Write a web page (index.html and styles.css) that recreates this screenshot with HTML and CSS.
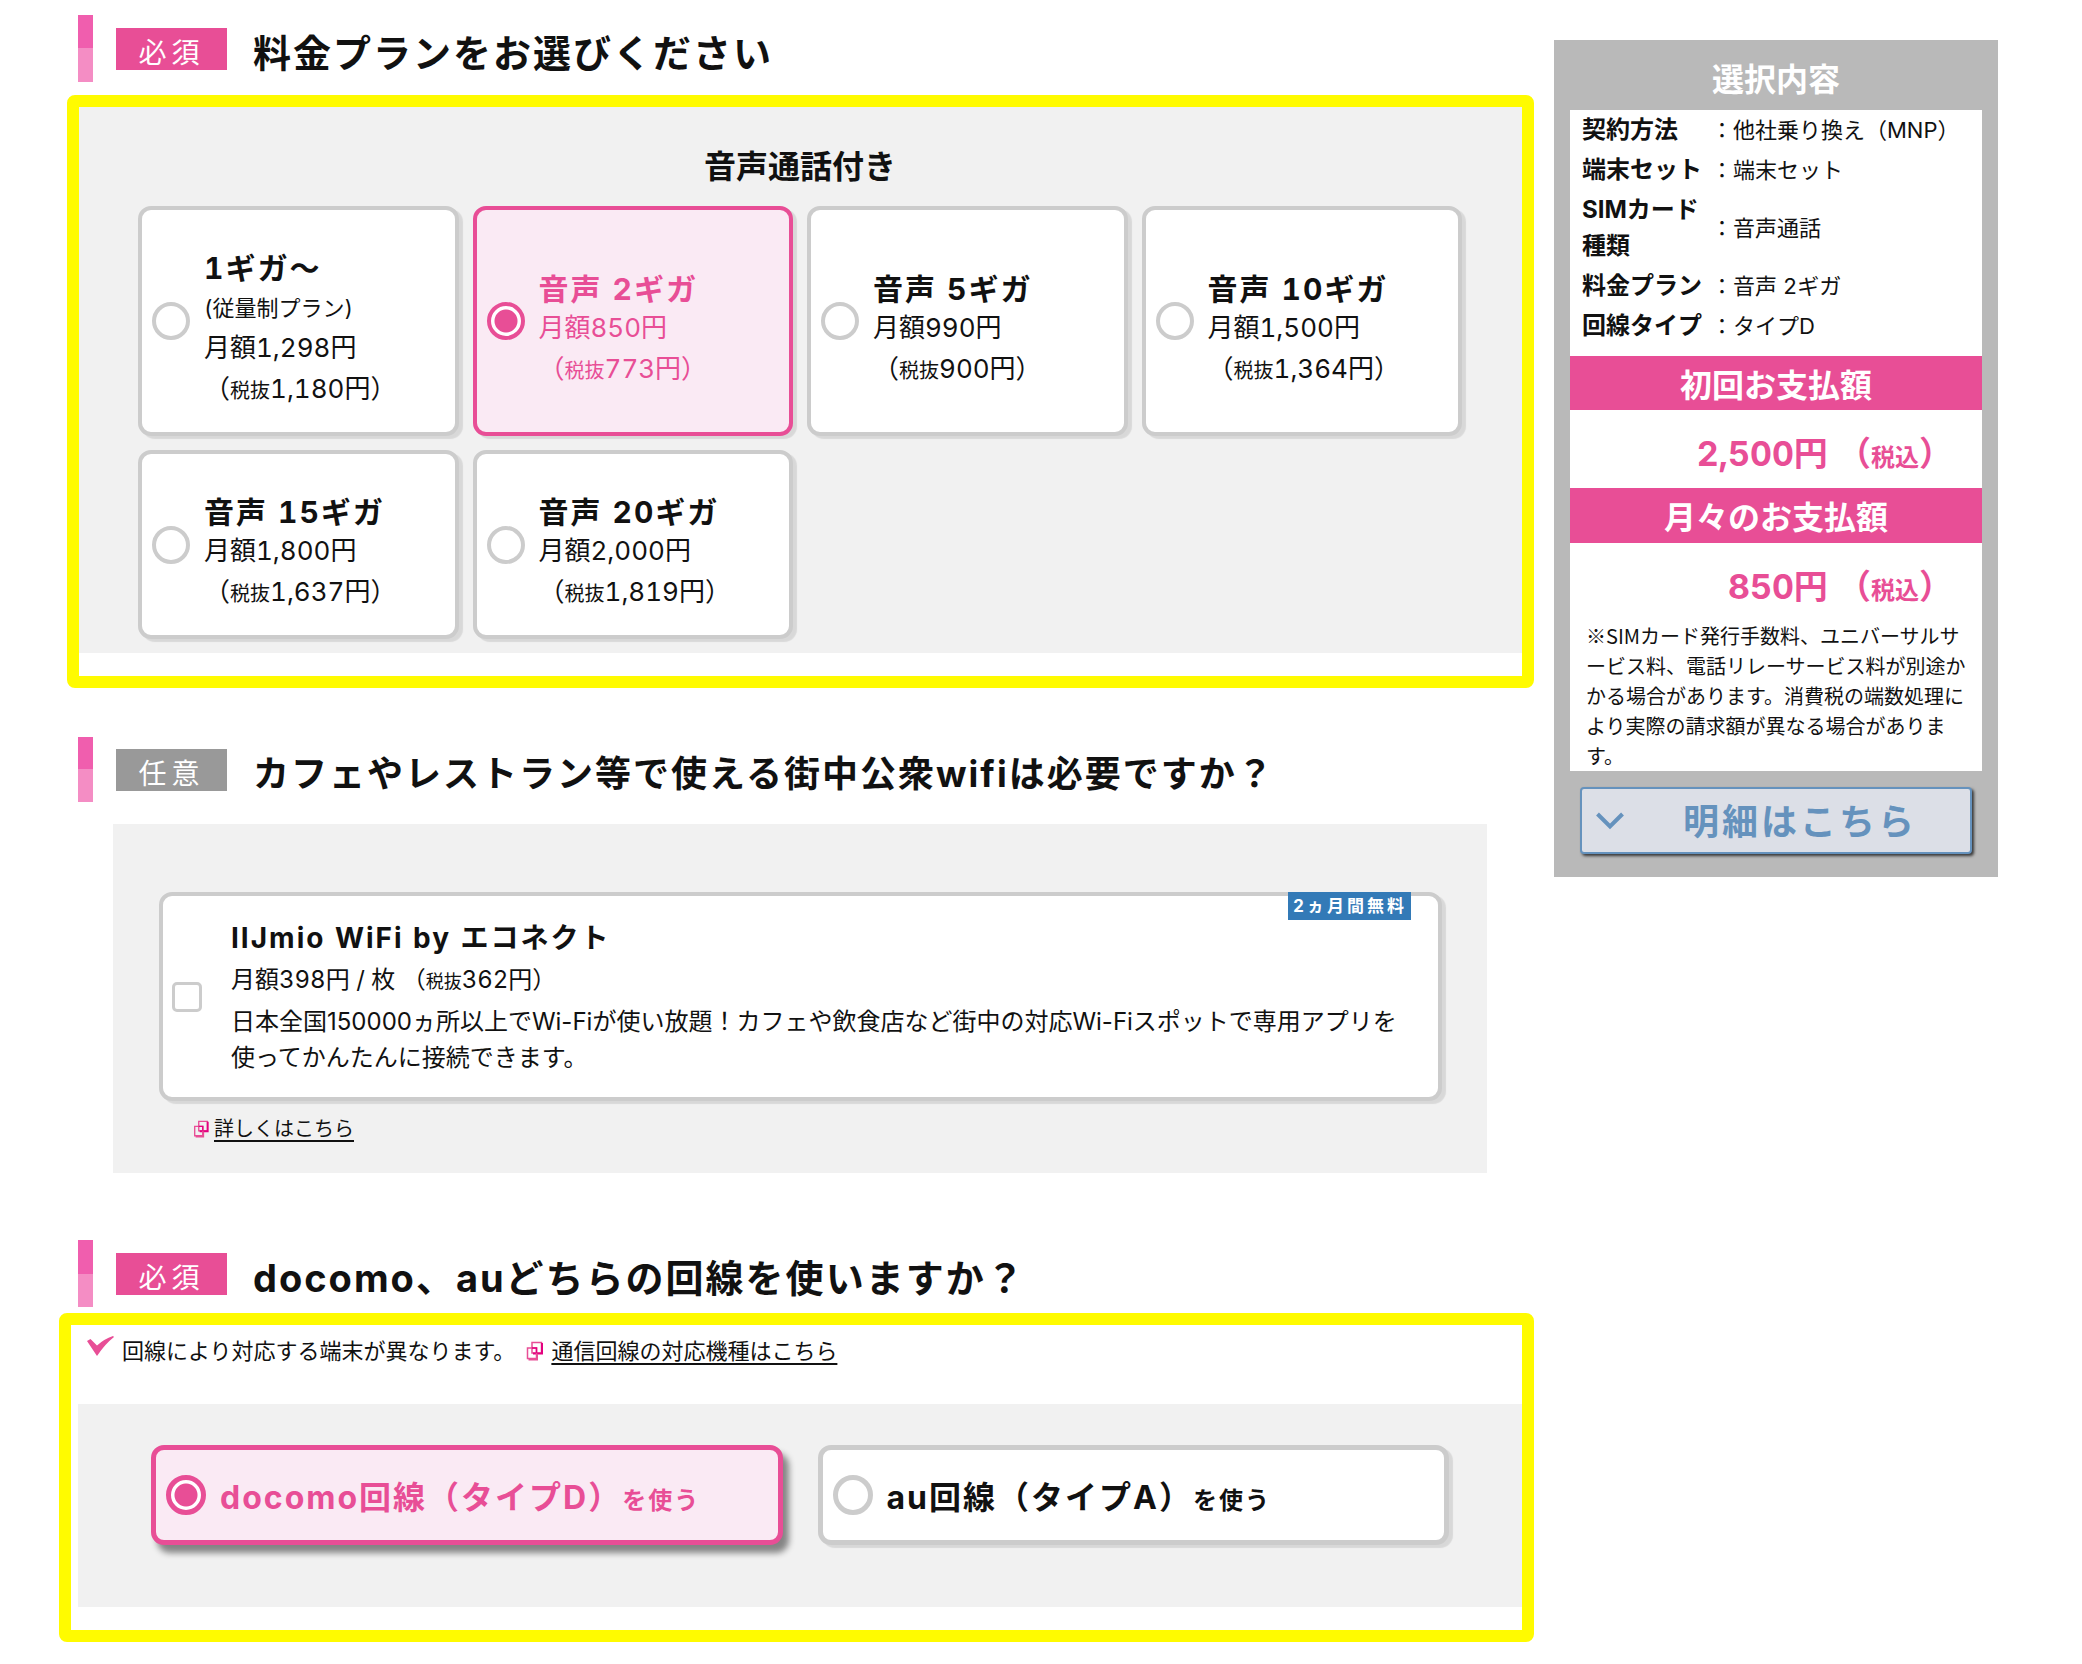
FILE: index.html
```html
<!DOCTYPE html>
<html lang="ja">
<head>
<meta charset="utf-8">
<meta name="viewport" content="width=device-width, initial-scale=1">
<title>料金プランの選択</title>
<link rel="stylesheet" href="styles.css">
</head>
<body>
<svg class="sprite" aria-hidden="true">
  <symbol id="icon-window" viewBox="0 0 17 20">
    <path d="M6 1.500h9.500v10.500H6z" fill="none" stroke="#e84e96" stroke-width="1.500"/>
    <path d="M16 2v10.500H7" fill="none" stroke="#e4007f" stroke-width="2"/>
    <path d="M1.500 7h9v10.500h-9z" fill="none" stroke="#e84e96" stroke-width="1.500"/>
    <path d="M11 13v5.500H2.500" fill="none" stroke="#e84e96" stroke-width="2"/>
    <path d="M6 7h4.500v5" fill="none" stroke="#e4007f" stroke-width="1.500"/>
  </symbol>
</svg>
<div class="page">
  <main class="main">
    <section>
      <div class="heading">
        <span class="tag">必須</span>
        <h2 class="heading-text">料金プランをお選びください</h2>
      </div>
      <div class="frame frame-plans">
        <fieldset class="panel panel-plans">
          <legend class="panel-title">音声通話付き</legend>
          <div class="plans">
            <label class="card plan">
              <input class="radio" type="radio" name="plan">
              <span class="plan-body"><strong class="name">1ギガ〜</strong><span class="price"><span class="sub">(従量制プラン)</span></span><span class="price">月額1,298円</span><span class="price">（<small>税抜</small>1,180円）</span></span>
            </label>
            <label class="card plan">
              <input class="radio" type="radio" name="plan" checked>
              <span class="plan-body"><strong class="name">音声 2ギガ</strong><span class="price">月額850円</span><span class="price">（<small>税抜</small>773円）</span></span>
            </label>
            <label class="card plan">
              <input class="radio" type="radio" name="plan">
              <span class="plan-body"><strong class="name">音声 5ギガ</strong><span class="price">月額990円</span><span class="price">（<small>税抜</small>900円）</span></span>
            </label>
            <label class="card plan">
              <input class="radio" type="radio" name="plan">
              <span class="plan-body"><strong class="name">音声 10ギガ</strong><span class="price">月額1,500円</span><span class="price">（<small>税抜</small>1,364円）</span></span>
            </label>
            <label class="card plan">
              <input class="radio" type="radio" name="plan">
              <span class="plan-body"><strong class="name">音声 15ギガ</strong><span class="price">月額1,800円</span><span class="price">（<small>税抜</small>1,637円）</span></span>
            </label>
            <label class="card plan">
              <input class="radio" type="radio" name="plan">
              <span class="plan-body"><strong class="name">音声 20ギガ</strong><span class="price">月額2,000円</span><span class="price">（<small>税抜</small>1,819円）</span></span>
            </label>
          </div>
        </fieldset>
      </div>
    </section>

    <section class="section-wifi">
      <div class="heading heading-small">
        <span class="tag tag-optional">任意</span>
        <h2 class="heading-text">カフェやレストラン等で使える街中公衆wifiは必要ですか？</h2>
      </div>
      <div class="panel panel-wifi">
        <label class="card wifi">
          <input class="checkbox" type="checkbox" name="wifi">
          <span class="wifi-body">
            <strong class="wifi-name">IIJmio WiFi by エコネクト</strong>
            <span class="wifi-price">月額398円 / 枚 （<small>税抜</small>362円）</span>
            <span class="wifi-text">日本全国150000ヵ所以上でWi-Fiが使い放題！カフェや飲食店など街中の対応Wi-Fiスポットで専用アプリを<br>使ってかんたんに接続できます。</span>
          </span>
          <span class="free">2ヵ月間無料</span>
        </label>
        <p class="more"><svg class="icon-window"><use href="#icon-window"/></svg><a href="#wifi">詳しくはこちら</a></p>
      </div>
    </section>

    <section class="section-line">
      <div class="heading">
        <span class="tag">必須</span>
        <h2 class="heading-text">docomo、auどちらの回線を使いますか？</h2>
      </div>
      <div class="frame frame-lines">
        <p class="note">
          <svg class="icon-check" viewBox="0 0 27 20"><path d="M0 5 3.500 3l6.500 6.500Q17 3 26 0l1 1Q18 8 10 20z" fill="#e84e96"/></svg>
          <span>回線により対応する端末が異なります。</span>
          <svg class="icon-window icon-window-large"><use href="#icon-window"/></svg>
          <a href="#devices">通信回線の対応機種はこちら</a>
        </p>
        <div class="panel panel-lines">
          <label class="card line">
            <input class="radio" type="radio" name="line" checked>
            <span class="line-name">docomo回線（タイプD）<small>を使う</small></span>
          </label>
          <label class="card line">
            <input class="radio" type="radio" name="line">
            <span class="line-name">au回線（タイプA）<small>を使う</small></span>
          </label>
        </div>
      </div>
    </section>
  </main>

  <aside class="summary">
    <h2 class="summary-title">選択内容</h2>
    <div class="summary-body">
      <table class="choices">
        <tr><th scope="row">契約方法</th><td>：他社乗り換え（MNP）</td></tr>
        <tr><th scope="row">端末セット</th><td>：端末セット</td></tr>
        <tr><th scope="row">SIMカード種類</th><td>：音声通話</td></tr>
        <tr><th scope="row">料金プラン</th><td>：音声 2ギガ</td></tr>
        <tr><th scope="row">回線タイプ</th><td>：タイプD</td></tr>
      </table>
      <h3 class="bar">初回お支払額</h3>
      <p class="amount">2,500円 （<small>税込</small>）</p>
      <h3 class="bar bar-monthly">月々のお支払額</h3>
      <p class="amount">850円 （<small>税込</small>）</p>
      <p class="remarks">※SIMカード発行手数料、ユニバーサルサ<br>ービス料、電話リレーサービス料が別途か<br>かる場合があります。消費税の端数処理に<br>より実際の請求額が異なる場合がありま<br>す。</p>
    </div>
    <button class="detail" type="button">
      <svg class="chevron" viewBox="0 0 28 18"><path d="M1.500 2 14 14.500 26.500 2" fill="none" stroke="currentColor" stroke-width="4"/></svg>
      <span class="detail-text">明細はこちら</span>
    </button>
  </aside>
</div>
</body>
</html>
```
FILE: styles.css
```css
:root {
  --pink: #e84e96;
  --pink-pale: #faeaf4;
  --line: #ccc;
  --panel: #f1f1f1;
  --yellow: #fffb00;
  --blue: #6592bd;
}

* {
  box-sizing: border-box;
}

body {
  margin: 0;
  background: #fff;
  color: #111;
  font-family: Inter, "Noto Sans CJK JP", sans-serif;
  font-variant-numeric: tabular-nums;
}

h2, h3, p {
  margin: 0;
}

a {
  color: inherit;
  text-decoration-thickness: 2px;
  text-underline-offset: 4px;
}

.sprite {
  display: none;
}

.page {
  display: flex;
  align-items: flex-start;
  gap: 20px;
  padding: 0 84px 22px 59px;
}

.main {
  flex: 1;
  min-width: 0;
  padding-top: 15px;
}

/* Section headings */
.heading {
  display: flex;
  align-items: center;
  height: 67px;
  margin-left: 19px;
  font-size: 38px;
}

.heading::before {
  content: "";
  align-self: stretch;
  width: 15px;
  margin-right: 23px;
  background: linear-gradient(#f05eae 50%, #f48dc4 50%);
}

.heading-small {
  height: 65px;
  font-size: 36px;
}

.tag {
  flex: none;
  width: 111px;
  height: 42px;
  margin-right: 26px;
  padding-top: 7px;
  background: var(--pink);
  color: #fff;
  font-size: 28px;
  line-height: 36px;
  letter-spacing: 5px;
  text-align: center;
}

.tag-optional {
  background: #999;
}

.heading-text {
  padding-top: 8px;
  font-size: inherit;
  font-weight: 700;
  line-height: 48px;
  letter-spacing: 2px;
}

/* Frames and panels */
.frame {
  border: 12px solid var(--yellow);
  border-radius: 8px;
  padding-bottom: 23px;
}

.panel {
  margin: 0;
  border: 0;
  background: var(--panel);
}

.frame-plans {
  margin: 13px 0 0 8px;
}

.panel-plans {
  padding: 36px 60px 14px 59px;
}

.panel-title {
  float: left;
  width: 100%;
  margin-bottom: 15px;
  padding: 0;
  font-size: 32px;
  font-weight: 700;
  line-height: 48px;
  text-align: center;
}

.plans {
  clear: both;
  display: grid;
  grid-template-columns: repeat(4, 1fr);
  gap: 14px;
}

/* Selectable cards */
.card {
  display: flex;
  align-items: center;
  border: 4px solid var(--line);
  border-radius: 13px;
  background: #fff;
  box-shadow: 4px 3px 1px rgba(0, 0, 0, 0.1);
}

.card:has(.radio:checked) {
  border-color: var(--pink);
  background: var(--pink-pale);
  color: var(--pink);
}

.radio {
  flex: none;
  appearance: none;
  width: 38px;
  height: 38px;
  margin: 0;
  border: 4px solid var(--line);
  border-radius: 50%;
  background: #fff;
}

.radio:checked {
  border-color: var(--pink);
  background: radial-gradient(circle, var(--pink) 11px, #fff 12px);
}

.plan {
  gap: 14px;
  padding: 22px 10px;
}

.plan-body {
  padding: 18px 0 1px;
  font-size: 26px;
}

.name {
  display: block;
  font-size: 30px;
  line-height: 36px;
  letter-spacing: 2px;
}

.price {
  display: block;
  height: 41px;
  line-height: 41px;
}

.price small {
  font-size: 20px;
}

.sub {
  font-size: 22px;
}

/* Wi-Fi option */
.section-wifi {
  margin-top: 49px;
}

.panel-wifi {
  margin: 22px 47px 0 54px;
  padding: 68px 45px 26px 46px;
}

.wifi {
  position: relative;
  gap: 29px;
  padding: 22px 10px 21px 9px;
}

.checkbox {
  flex: none;
  appearance: none;
  width: 30px;
  height: 30px;
  margin: 0;
  border: 3px solid var(--line);
  border-radius: 5px;
  background: #fff;
}

.wifi-body {
  font-size: 24px;
  line-height: 36px;
}

.wifi-name,
.wifi-price,
.wifi-text {
  display: block;
}

.wifi-name {
  font-size: 28px;
  line-height: 40px;
  letter-spacing: 2px;
}

.wifi-price {
  height: 46px;
  line-height: 43px;
}

.wifi-price small {
  font-size: 18px;
}

.wifi-text {
  font-variant-numeric: normal;
}

.free {
  position: absolute;
  top: -4px;
  right: 27px;
  padding: 0 4px 0 5px;
  background: #337ab7;
  color: #fff;
  font-size: 17px;
  font-weight: 700;
  line-height: 28px;
  letter-spacing: 3px;
}

.more {
  display: flex;
  align-items: center;
  gap: 5px;
  margin-top: 10px;
  padding-left: 34px;
  font-size: 20px;
  line-height: 36px;
}

.icon-window {
  width: 16px;
  height: 18px;
}

.icon-window-large {
  width: 17px;
  height: 20px;
  margin-left: 3px;
}

/* Carrier choice */
.section-line {
  margin-top: 67px;
}

.frame-lines {
  margin-top: 6px;
}

.note {
  display: flex;
  align-items: center;
  gap: 8px;
  padding: 8px 16px 35px;
  font-size: 22px;
  line-height: 36px;
}

.icon-check {
  width: 27px;
  height: 20px;
  margin-bottom: 10px;
}

.panel-lines {
  display: grid;
  grid-template-columns: 1fr 1fr;
  gap: 35px;
  margin-left: 7px;
  padding: 41px 73px 62px;
}

.line {
  gap: 14px;
  height: 100px;
  padding: 0 10px;
  border-width: 5px;
}

.line:has(.radio:checked) {
  box-shadow: 6px 8px 6px rgba(0, 0, 0, 0.45);
}

.line .radio {
  width: 40px;
  height: 40px;
  border-width: 5px;
}

.line-name {
  padding-top: 8px;
  font-size: 32px;
  font-weight: 700;
  line-height: 44px;
  letter-spacing: 2px;
}

.line-name small {
  font-size: 24px;
}

/* Summary column */
.summary {
  flex: none;
  width: 444px;
  margin-top: 40px;
  padding: 16px 16px 23px;
  background: #b9b9b9;
}

.summary-title {
  padding-bottom: 6px;
  color: #fff;
  font-size: 32px;
  line-height: 48px;
  text-align: center;
}

.summary-body {
  background: #fff;
}

.choices {
  width: 100%;
  margin-bottom: 10px;
  border-collapse: collapse;
  line-height: 36px;
}

.choices th {
  width: 141px;
  padding: 2px 4px 2px 12px;
  font-size: 24px;
  text-align: left;
}

.choices td {
  padding: 2px 0;
  font-size: 22px;
}

.bar {
  padding-top: 6px;
  background: var(--pink);
  color: #fff;
  font-size: 32px;
  line-height: 48px;
  text-align: center;
}

.bar-monthly {
  padding-bottom: 1px;
}

.amount {
  padding: 19px 29px 9px 0;
  color: var(--pink);
  font-size: 34px;
  font-weight: 700;
  line-height: 50px;
  text-align: right;
}

.amount small {
  font-size: 24px;
  line-height: 1;
}

.remarks {
  padding-left: 16px;
  font-family: "Noto Sans CJK JP", sans-serif;
  font-size: 20px;
  line-height: 30px;
  white-space: nowrap;
}

.detail {
  display: flex;
  align-items: center;
  width: calc(100% - 20px);
  height: 67px;
  margin: 16px 10px 0;
  padding: 0 14px;
  border: 2px solid var(--blue);
  border-radius: 4px;
  background: #dcdfe7;
  box-shadow: 2px 2px 3px rgba(0, 0, 0, 0.7);
  color: var(--blue);
  font-family: inherit;
  font-size: 36px;
  font-weight: 700;
  letter-spacing: 3px;
}

.chevron {
  width: 28px;
  height: 18px;
}

.detail-text {
  flex: 1;
  padding: 0 0 4px 20px;
}
```
